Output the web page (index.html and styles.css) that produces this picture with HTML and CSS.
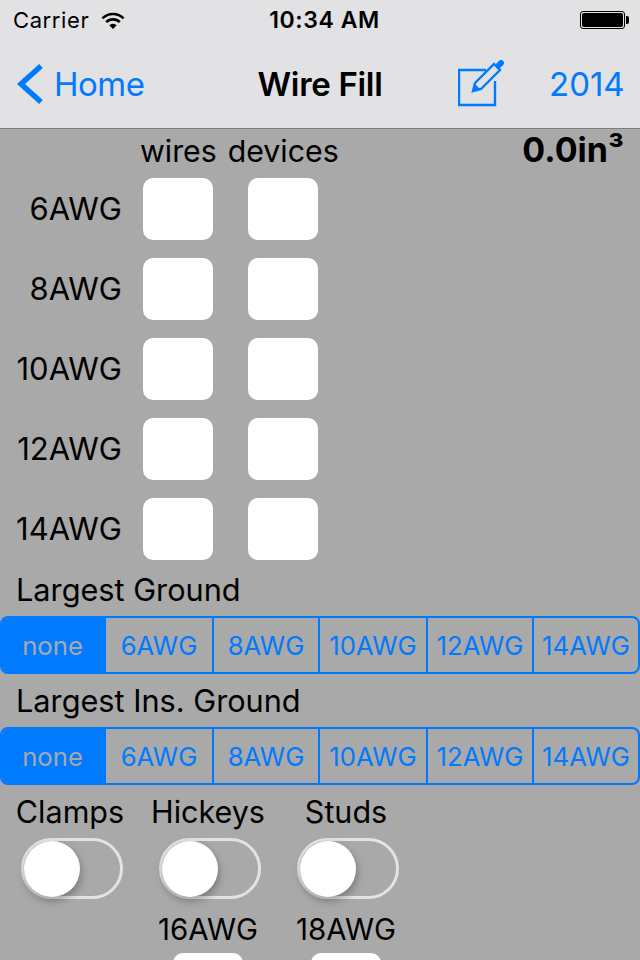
FILE: index.html
```html
<!DOCTYPE html>
<html lang="en">
<head>
    <meta charset="UTF-8">
    <meta name="viewport" content="width=device-width, initial-scale=1.0">
    <title>Wire Fill</title>
    <link rel="stylesheet" href="styles.css">
</head>
<body>
    <header class="top-bar">
        <div class="status-bar">
            <div class="status-left">
                <span>Carrier</span>
                <svg class="wifi" width="24" height="17" viewBox="0 0 24 17">
                    <path d="M12 17 8.300 13.300a5.200 5.200 0 0 1 7.400 0Z" fill="#000"/>
                    <path d="M5.200 10.200a9.600 9.600 0 0 1 13.600 0" fill="none" stroke="#000" stroke-width="2.600"/>
                    <path d="M1.400 6.400a15 15 0 0 1 21.200 0" fill="none" stroke="#000" stroke-width="2.600"/>
                </svg>
            </div>
            <span class="status-time">10:34 AM</span>
            <div class="battery"><span class="battery-level"></span></div>
        </div>
        <nav class="nav-bar">
            <a class="nav-back">
                <svg width="28" height="42" viewBox="0 0 28 42">
                    <path d="M25 3 5 21l20 18" fill="none" stroke="#007aff" stroke-width="5.400"/>
                </svg>
                <span>Home</span>
            </a>
            <h1 class="nav-title">Wire Fill</h1>
            <div class="nav-actions">
                <svg class="compose" width="48" height="48" viewBox="0 0 48 48">
                    <path d="M28 10H1v35h36V21" fill="none" stroke="#007aff" stroke-width="2.400"/>
                    <path d="M15 31l2-8L36 4l6 6-19 19Z" fill="none" stroke="#007aff" stroke-width="2.400"/>
                    <path d="M15 31l2-7 5 5Z" fill="#007aff"/>
                    <path d="M40.500 5.500 43 3" fill="none" stroke="#007aff" stroke-width="6" stroke-linecap="round"/>
                </svg>
                <a class="nav-year">2014</a>
            </div>
        </nav>
    </header>

    <main class="content">
        <div class="head-row">
            <span class="col-head wires">wires</span>
            <span class="col-head">devices</span>
            <span class="volume">0.0in³</span>
        </div>

        <div class="wire-grid">
            <span class="wire-label">6AWG</span><div class="field"></div><div class="field"></div>
            <span class="wire-label">8AWG</span><div class="field"></div><div class="field"></div>
            <span class="wire-label">10AWG</span><div class="field"></div><div class="field"></div>
            <span class="wire-label">12AWG</span><div class="field"></div><div class="field"></div>
            <span class="wire-label">14AWG</span><div class="field"></div><div class="field"></div>
        </div>

        <h2 class="section-label">Largest Ground</h2>
        <div class="segments">
            <span class="segment active">none</span>
            <span class="segment">6AWG</span>
            <span class="segment">8AWG</span>
            <span class="segment">10AWG</span>
            <span class="segment">12AWG</span>
            <span class="segment">14AWG</span>
        </div>

        <h2 class="section-label">Largest Ins. Ground</h2>
        <div class="segments">
            <span class="segment active">none</span>
            <span class="segment">6AWG</span>
            <span class="segment">8AWG</span>
            <span class="segment">10AWG</span>
            <span class="segment">12AWG</span>
            <span class="segment">14AWG</span>
        </div>

        <div class="toggles">
            <div class="toggle-col">
                <span class="toggle-label">Clamps</span>
                <div class="switch"><span class="knob"></span></div>
            </div>
            <div class="toggle-col">
                <span class="toggle-label">Hickeys</span>
                <div class="switch"><span class="knob"></span></div>
                <span class="toggle-label small">16AWG</span>
                <div class="field"></div>
            </div>
            <div class="toggle-col">
                <span class="toggle-label">Studs</span>
                <div class="switch"><span class="knob"></span></div>
                <span class="toggle-label small">18AWG</span>
                <div class="field"></div>
            </div>
        </div>
    </main>
</body>
</html>
```

FILE: styles.css
```css
html, body {
    height: 960px;
    overflow: hidden;
}
body {
    font-family: 'Inter', 'Liberation Sans', sans-serif;
    margin: 0;
    background: #a9a9a9;
    color: #000;
}
.top-bar {
    background: #e2e2e4;
    border-bottom: 1px solid #7d7d7d;
    height: 128px;
}
.status-bar {
    height: 40px;
    display: grid;
    grid-template-columns: 1fr auto 1fr;
    align-items: center;
    padding: 0 11px 0 13px;
    font-size: 22px;
    letter-spacing: 0.6px;
}
.status-left {
    display: flex;
    align-items: center;
    gap: 12px;
}
.status-time {
    font-weight: 600;
    font-size: 23px;
    margin-left: 7px;
}
.battery {
    width: 45px;
    height: 18px;
    border: 1px solid #000;
    border-radius: 3px;
    padding: 1px;
    box-sizing: border-box;
    position: relative;
    justify-self: end;
    margin-right: 4px;
}
.battery::after {
    content: '';
    position: absolute;
    right: -5px;
    top: 4px;
    width: 3px;
    height: 8px;
    background: #000;
    border-radius: 0 2px 2px 0;
}
.battery-level {
    display: block;
    height: 100%;
    background: #000;
    border-radius: 2px;
}
.nav-bar {
    height: 88px;
    display: flex;
    align-items: center;
    justify-content: space-between;
    padding: 0 17px 0 16px;
    position: relative;
}
.nav-back {
    display: flex;
    align-items: center;
    gap: 10px;
    color: #007aff;
    font-size: 33px;
    letter-spacing: -0.5px;
}
.nav-title {
    position: absolute;
    left: 0;
    right: 0;
    margin: 0;
    text-align: center;
    font-size: 33px;
    font-weight: 600;
    letter-spacing: -0.3px;
}
.nav-actions {
    display: flex;
    align-items: center;
    gap: 43px;
    color: #007aff;
    font-size: 33px;
}
.nav-year {
    width: 74px;
    text-align: right;
}
.content {
    display: flex;
    flex-direction: column;
}
.head-row {
    height: 49px;
    display: flex;
    align-items: center;
    font-size: 30.300px;
    padding: 0 0 6px 140px;
    box-sizing: border-box;
    position: relative;
}
.col-head.wires {
    margin-right: 11px;
}
.volume {
    position: absolute;
    right: 16px;
    top: 0;
    font-weight: 700;
    font-size: 34px;
}
.wire-grid {
    display: grid;
    grid-template-columns: 108px 70px 70px;
    grid-auto-rows: 62px;
    column-gap: 35px;
    row-gap: 18px;
}
.wire-label {
    font-size: 31px;
    text-align: right;
    line-height: 62px;
    white-space: nowrap;
    margin-right: -14px;
}
.field {
    background: #fff;
    border-radius: 10px;
    width: 70px;
    height: 62px;
}
.section-label {
    font-size: 30.700px;
    font-weight: 400;
    margin: 10px 0 6px 16px;
    line-height: 40px;
}
.segments + .section-label {
    margin-top: 7px;
}
.segments {
    display: grid;
    grid-template-columns: 104px 108px 106px 108px 106px 104px;
    height: 58px;
    border: 2px solid #007aff;
    border-radius: 8px;
    box-sizing: border-box;
    overflow: hidden;
}
.segment {
    display: flex;
    align-items: center;
    justify-content: center;
    color: #007aff;
    font-size: 25.700px;
    border-right: 2px solid #007aff;
}
.segment:last-child {
    border-right: none;
}
.segment.active {
    background: #007aff;
    color: #a9a9a9;
    border-right: none;
    padding-right: 3px;
}
.toggles {
    display: flex;
    padding-left: 3px;
    margin-top: 5px;
}
.toggle-col {
    width: 138px;
    display: flex;
    flex-direction: column;
    align-items: center;
}
.toggle-label {
    font-size: 30.500px;
    line-height: 44px;
    margin-left: -4px;
}
.toggle-label.small {
    font-size: 29.500px;
    margin-top: -1px;
    margin-bottom: 2px;
}
.toggle-col .field {
    margin-left: -4px;
}
.switch {
    width: 102px;
    height: 61px;
    border: 3px solid #e3e3e3;
    border-radius: 31px;
    box-sizing: border-box;
    position: relative;
    margin-top: 4px;
    margin-bottom: 9px;
}
.knob {
    position: absolute;
    left: 0;
    top: 0;
    width: 56px;
    height: 56px;
    background: #fff;
    border-radius: 50%;
    box-shadow: 1px 4px 9px rgba(0, 0, 0, 0.3);
}
```
